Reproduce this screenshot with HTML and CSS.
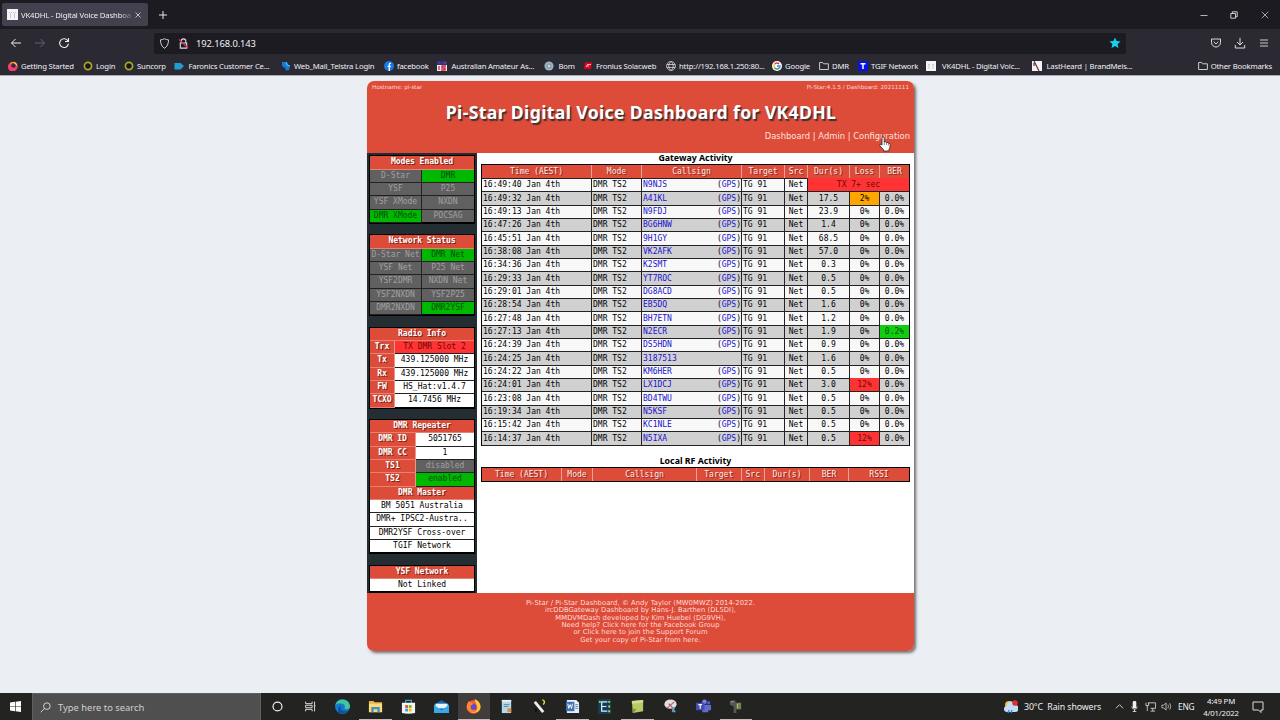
FILE: index.html
```html
<!DOCTYPE html>
<html lang="en">
<head>
    <meta charset="UTF-8">
    <meta name="viewport" content="width=device-width, initial-scale=1.0">
    <title>VK4DHL - Digital Voice Dashboard</title>
    <link rel="stylesheet" href="styles.css">
</head>
<body>
    <div class="tabbar">
        <div class="tab">
            <svg class="tab-icon" viewBox="0 0 11 11"><rect width="11" height="11" fill="#f4f4f6"/><path d="M2 3l1.5 1.5L5 3M3.500 4v5M6 3l1.500 1.500L9 3M7.500 4v5" stroke="#c9c9d0" fill="none"/></svg>
            <span class="tab-title">VK4DHL - Digital Voice Dashboa</span>
            <svg class="tab-close" viewBox="0 0 6 6"><path d="M.5.5l5 5M5.500.5l-5 5" stroke="#ddd" stroke-width=".8"/></svg>
        </div>
        <svg class="new-tab" viewBox="0 0 8 8"><path d="M4 0v8M0 4h8" stroke="#e8e8ee"/></svg>
        <div class="window-buttons">
            <svg viewBox="0 0 8 8"><path d="M.5 4.500h7" stroke="#ddd" stroke-width=".8"/></svg>
            <svg viewBox="0 0 8 8"><path d="M.8 2.500h4.700v4.700H.8zM2.300 2.500V.8h4.900v4.900H5.500" stroke="#ddd" stroke-width=".9" fill="none"/></svg>
            <svg viewBox="0 0 8 8"><path d="M.8.8l6.400 6.400M7.200.8L.8 7.200" stroke="#ddd" stroke-width=".7"/></svg>
        </div>
    </div>

    <div class="toolbar">
        <svg class="tool" viewBox="0 0 12 12"><path d="M11 6H1.500M5.500 2l-4 4 4 4" stroke="#eee" fill="none"/></svg>
        <svg class="tool" viewBox="0 0 12 12"><path d="M1 6h9.500M6.500 2l4 4-4 4" stroke="#62616c" fill="none"/></svg>
        <svg class="tool" viewBox="0 0 12 12"><path d="M9.900 4A4.400 4.400 0 1 0 10.400 6.600M10.500 1v3.500H7" stroke="#eee" stroke-width="1.100" fill="none"/></svg>
        <div class="urlbar">
            <svg class="url-icon" viewBox="0 0 12 12"><path d="M6 .8c1.500.8 3 1.200 4.400 1.200 0 4.500-1.500 7.500-4.400 9.200C3.100 9.500 1.600 6.500 1.600 2 3 2 4.500 1.600 6 .8z" stroke="#ddd" fill="none"/></svg>
            <svg class="url-icon" viewBox="0 0 12 12"><path d="M3.500 5V3.500a2.500 2.500 0 0 1 5 0V5M2.500 5.500h7V11h-7z" stroke="#ddd" stroke-width="1.200" fill="none"/><path d="M1 1.500l10 9.500" stroke="#e2305a" stroke-width="1.400"/></svg>
            <span class="url">192.168.0.143</span>
            <svg class="star" viewBox="0 0 12 12"><path d="M6 .5l1.600 3.600 4 .4-3 2.600.9 3.900L6 9l-3.500 2 .9-3.900-3-2.600 4-.4z" fill="#12d3ee"/></svg>
        </div>
        <div class="toolbar-right">
            <svg viewBox="0 0 12 12"><path d="M1.500 2h9v3.500a4.500 4.500 0 0 1-9 0zM3.600 4.700L6 7l2.400-2.300" stroke="#ddd" fill="none"/></svg>
            <svg viewBox="0 0 12 12"><path d="M6 .8v7M3 5l3 3 3-3M1.300 8v3h9.400V8" stroke="#ddd" fill="none"/></svg>
            <svg viewBox="0 0 12 12"><path d="M2 3h8M2 6h8M2 9h8" stroke="#ddd" stroke-width=".9"/></svg>
        </div>
    </div>

    <div class="bookmarks">
        <a class="bm w75"><svg viewBox="0 0 10 10"><circle cx="5" cy="5.200" r="4.500" fill="#ff7139"/><path d="M1 3a4.500 4.500 0 0 0 7 6 5 5 0 0 0 1.500-4" fill="#f0416a"/><circle cx="5.500" cy="4.500" r="2.300" fill="#35254c"/><path d="M5 1c3 0 4 2 4.300 4L7.500 3.500z" fill="#ffd45a"/></svg>Getting Started</a>
        <a class="bm w41"><svg viewBox="0 0 10 10"><circle cx="5" cy="5" r="3.600" stroke="#a9a528" stroke-width="1.700" fill="#17171b"/></svg>Login</a>
        <a class="bm w50"><svg viewBox="0 0 10 10"><circle cx="5" cy="5" r="3.600" stroke="#a9a528" stroke-width="1.700" fill="#17171b"/></svg>Suncorp</a>
        <a class="bm w107 gap-wide"><svg viewBox="0 0 10 10"><path d="M.5 2h6l3.500 3-3.500 3.500h-6z" fill="#239bd5"/></svg>Faronics Customer Ce...</a>
        <a class="bm w103"><svg viewBox="0 0 10 10"><path d="M1 1h5l1.500 3L9 5l-1 4-3 .5L4 7 1 5z" fill="#137bd0"/><path d="M5 1l1 3 3 1" stroke="#6cc2f5" fill="none"/></svg>Web_Mail_Telstra Login</a>
        <a class="bm w53"><svg viewBox="0 0 10 10"><circle cx="5" cy="5" r="5" fill="#1878e8"/><path d="M7 2.300H6Q5.300 2.300 5.300 3.300V10M3.600 5.400h3.200" stroke="#fff" stroke-width="1.300" fill="none"/></svg>facebook</a>
        <a class="bm w107 gap-wide"><svg viewBox="0 0 10 10"><path d="M0 0h10v4H0z" fill="#26378f"/><path d="M0 4h10v6H0z" fill="#eee"/><path d="M2 2h1M7 2h2M2 5v4M9 5H5v2h3v2H4" stroke="#d6203a" stroke-width="1.300" fill="none"/></svg>Australian Amateur As...</a>
        <a class="bm w39 gap-wide"><svg viewBox="0 0 10 10"><circle cx="5" cy="5" r="4.600" fill="#9db0bf"/><circle cx="5" cy="5" r="2" fill="#d2dce3" stroke="#70899d"/></svg>Bom</a>
        <a class="bm w83"><svg viewBox="0 0 10 10"><path d="M2 1.500h7L8 8H1z" fill="#e2001a"/><path d="M3 6l1.500-2.500H8M4 5h2" stroke="#fff" stroke-width=".7" fill="none"/></svg>Fronius Solar.web</a>
        <a class="bm w106"><svg viewBox="0 0 10 10"><path d="M5 .6a4.400 4.400 0 1 0 .01 0M5 .6c-3 2.500-3 6.300 0 8.800 3-2.500 3-6.300 0-8.800M1 3.500h8M1 6.500h8" stroke="#ddd" stroke-width=".8" fill="none"/></svg>http://192.168.1.250:80...</a>
        <a class="bm w47"><svg viewBox="0 0 10 10"><circle cx="5" cy="5" r="5" fill="#fff"/><g fill="none" stroke-width="1.400"><path d="M2.500 3.300A3 3 0 0 1 7.200 2.900" stroke="#ea4335"/><path d="M2.500 3.300a3 3 0 0 0 0 3.400" stroke="#fbbc05"/><path d="M2.500 6.700a3 3 0 0 0 4.700.4" stroke="#34a853"/><path d="M7.200 7.100A3 3 0 0 0 8 5H5" stroke="#4285f4"/></g></svg>Google</a>
        <a class="bm w39"><svg viewBox="0 0 10 10"><path d="M.6 1.500h3l1 1.300h4.800v5.700H.6z" stroke="#ddd" stroke-width=".9" fill="none"/></svg>DMR</a>
        <a class="bm w68"><svg viewBox="0 0 10 10"><rect width="10" height="10" fill="#0712e8"/><path d="M2.500 2.700h5M5 2.700V8" stroke="#fff" stroke-width="1.500"/></svg>TGIF Network</a>
        <a class="bm w106 gap-wider"><svg viewBox="0 0 10 10"><rect width="10" height="10" fill="#f4f4f6"/><path d="M2 3l1 1 1-1M3 4v4M6 3l1 1 1-1M7 4v4" stroke="#c9c9d0" fill="none"/></svg>VK4DHL - Digital Voic...</a>
        <a class="bm w106 gap-wide"><svg viewBox="0 0 10 10"><rect width="10" height="10" fill="#f4f4f6"/><path d="M2 0l5 10M2 2v3" stroke="#6a3038" stroke-width="1.200"/></svg>LastHeard | BrandMeis...</a>
        <a class="bm other"><svg viewBox="0 0 10 10"><path d="M.6 1.500h3l1 1.300h4.800v5.700H.6z" stroke="#ddd" stroke-width=".9" fill="none"/></svg>Other Bookmarks</a>
    </div>

    <div class="page">
        <div class="container">
            <div class="header">
                <div class="smallprint"><span>Hostname: pi-star</span><span>Pi-Star:4.1.5 / Dashboard: 20211111</span></div>
                <h1>Pi-Star Digital Voice Dashboard for VK4DHL</h1>
                <div class="navbar"><a>Dashboard</a> | <a>Admin</a> | <a>Configuration</a></div>
                <svg class="cursor" viewBox="0 0 12 16"><path d="M3 9V2q0-1.300 1.100-1.300T5.200 2v4q2-.6 2.300.5 1.600-.3 1.900.7 1.800-.1 1.800 1.300c0 3-.7 3.500-1.200 5V15H4.500v-1.300L.8 9.800Q.4 8.200 1.800 8.300z" fill="#fff" stroke="#222" stroke-width=".8"/><path d="M5.300 6v3M7.500 6.500V9M9.400 7.200V9.500" stroke="#444" stroke-width=".6"/></svg>
            </div>

            <div class="main">
                <div class="nav">
                    <div class="box halves">
                        <b class="full">Modes Enabled</b>
                        <i class="off">D-Star</i><i class="on">DMR</i>
                        <i class="off">YSF</i><i class="off">P25</i>
                        <i class="off">YSF XMode</i><i class="off">NXDN</i>
                        <i class="on">DMR XMode</i><i class="off">POCSAG</i>
                    </div>
                    <div class="box halves">
                        <b class="full">Network Status</b>
                        <i class="off">D-Star Net</i><i class="on">DMR Net</i>
                        <i class="off">YSF Net</i><i class="off">P25 Net</i>
                        <i class="off">YSF2DMR</i><i class="off">NXDN Net</i>
                        <i class="off">YSF2NXDN</i><i class="off">YSF2P25</i>
                        <i class="off">DMR2NXDN</i><i class="on">DMR2YSF</i>
                    </div>
                    <div class="box radio">
                        <b class="full">Radio Info</b>
                        <b>Trx</b><i class="tx">TX DMR Slot 2</i>
                        <b>Tx</b><i>439.125000 MHz</i>
                        <b>Rx</b><i>439.125000 MHz</i>
                        <b>FW</b><i>HS_Hat:v1.4.7</i>
                        <b>TCXO</b><i>14.7456 MHz</i>
                    </div>
                    <div class="box repeater">
                        <b class="full">DMR Repeater</b>
                        <b>DMR ID</b><i>5051765</i>
                        <b>DMR CC</b><i>1</i>
                        <b>TS1</b><i class="off">disabled</i>
                        <b>TS2</b><i class="on">enabled</i>
                        <b class="full">DMR Master</b>
                        <i class="full">BM 5051 Australia</i>
                        <i class="full">DMR+ IPSC2-Austra..</i>
                        <i class="full">DMR2YSF Cross-over</i>
                        <i class="full">TGIF Network</i>
                    </div>
                    <div class="box halves">
                        <b class="full">YSF Network</b>
                        <i class="full">Not Linked</i>
                    </div>
                </div>

                <div class="content">
                    <h2>Gateway Activity</h2>
                    <div class="log gateway">
                        <div class="row head"><b>Time (AEST)</b><b>Mode</b><b>Callsign</b><b>Target</b><b>Src</b><b>Dur(s)</b><b>Loss</b><b>BER</b></div>
                        <div class="row"><i>16:49:40 Jan 4th</i><i>DMR TS2</i><i><a>N9NJS</a><span>(<a>GPS</a>)</span></i><i>TG 91</i><i>Net</i><i class="txing">TX 7+ sec</i></div>
                        <div class="row"><i>16:49:32 Jan 4th</i><i>DMR TS2</i><i><a>A41KL</a><span>(<a>GPS</a>)</span></i><i>TG 91</i><i>Net</i><i>17.5</i><i class="warn">2%</i><i>0.0%</i></div>
                        <div class="row"><i>16:49:13 Jan 4th</i><i>DMR TS2</i><i><a>N9FDJ</a><span>(<a>GPS</a>)</span></i><i>TG 91</i><i>Net</i><i>23.9</i><i>0%</i><i>0.0%</i></div>
                        <div class="row"><i>16:47:26 Jan 4th</i><i>DMR TS2</i><i><a>BG6HNW</a><span>(<a>GPS</a>)</span></i><i>TG 91</i><i>Net</i><i>1.4</i><i>0%</i><i>0.0%</i></div>
                        <div class="row"><i>16:45:51 Jan 4th</i><i>DMR TS2</i><i><a>9H1GY</a><span>(<a>GPS</a>)</span></i><i>TG 91</i><i>Net</i><i>68.5</i><i>0%</i><i>0.0%</i></div>
                        <div class="row"><i>16:38:08 Jan 4th</i><i>DMR TS2</i><i><a>VK2AFK</a><span>(<a>GPS</a>)</span></i><i>TG 91</i><i>Net</i><i>57.0</i><i>0%</i><i>0.0%</i></div>
                        <div class="row"><i>16:34:36 Jan 4th</i><i>DMR TS2</i><i><a>K2SMT</a><span>(<a>GPS</a>)</span></i><i>TG 91</i><i>Net</i><i>0.3</i><i>0%</i><i>0.0%</i></div>
                        <div class="row"><i>16:29:33 Jan 4th</i><i>DMR TS2</i><i><a>YT7ROC</a><span>(<a>GPS</a>)</span></i><i>TG 91</i><i>Net</i><i>0.5</i><i>0%</i><i>0.0%</i></div>
                        <div class="row"><i>16:29:01 Jan 4th</i><i>DMR TS2</i><i><a>DG8ACD</a><span>(<a>GPS</a>)</span></i><i>TG 91</i><i>Net</i><i>0.5</i><i>0%</i><i>0.0%</i></div>
                        <div class="row"><i>16:28:54 Jan 4th</i><i>DMR TS2</i><i><a>EB5DQ</a><span>(<a>GPS</a>)</span></i><i>TG 91</i><i>Net</i><i>1.6</i><i>0%</i><i>0.0%</i></div>
                        <div class="row"><i>16:27:48 Jan 4th</i><i>DMR TS2</i><i><a>BH7ETN</a><span>(<a>GPS</a>)</span></i><i>TG 91</i><i>Net</i><i>1.2</i><i>0%</i><i>0.0%</i></div>
                        <div class="row"><i>16:27:13 Jan 4th</i><i>DMR TS2</i><i><a>N2ECR</a><span>(<a>GPS</a>)</span></i><i>TG 91</i><i>Net</i><i>1.9</i><i>0%</i><i class="good">0.2%</i></div>
                        <div class="row"><i>16:24:39 Jan 4th</i><i>DMR TS2</i><i><a>DS5HDN</a><span>(<a>GPS</a>)</span></i><i>TG 91</i><i>Net</i><i>0.9</i><i>0%</i><i>0.0%</i></div>
                        <div class="row"><i>16:24:25 Jan 4th</i><i>DMR TS2</i><i><a>3187513</a></i><i>TG 91</i><i>Net</i><i>1.6</i><i>0%</i><i>0.0%</i></div>
                        <div class="row"><i>16:24:22 Jan 4th</i><i>DMR TS2</i><i><a>KM6HER</a><span>(<a>GPS</a>)</span></i><i>TG 91</i><i>Net</i><i>0.5</i><i>0%</i><i>0.0%</i></div>
                        <div class="row"><i>16:24:01 Jan 4th</i><i>DMR TS2</i><i><a>LX1DCJ</a><span>(<a>GPS</a>)</span></i><i>TG 91</i><i>Net</i><i>3.0</i><i class="bad">12%</i><i>0.0%</i></div>
                        <div class="row"><i>16:23:08 Jan 4th</i><i>DMR TS2</i><i><a>BD4TWU</a><span>(<a>GPS</a>)</span></i><i>TG 91</i><i>Net</i><i>0.5</i><i>0%</i><i>0.0%</i></div>
                        <div class="row"><i>16:19:34 Jan 4th</i><i>DMR TS2</i><i><a>N5KSF</a><span>(<a>GPS</a>)</span></i><i>TG 91</i><i>Net</i><i>0.5</i><i>0%</i><i>0.0%</i></div>
                        <div class="row"><i>16:15:42 Jan 4th</i><i>DMR TS2</i><i><a>KC1NLE</a><span>(<a>GPS</a>)</span></i><i>TG 91</i><i>Net</i><i>0.5</i><i>0%</i><i>0.0%</i></div>
                        <div class="row"><i>16:14:37 Jan 4th</i><i>DMR TS2</i><i><a>N5IXA</a><span>(<a>GPS</a>)</span></i><i>TG 91</i><i>Net</i><i>0.5</i><i class="bad">12%</i><i>0.0%</i></div>
                    </div>
                    <h2 class="second">Local RF Activity</h2>
                    <div class="log local">
                        <div class="row head"><b>Time (AEST)</b><b>Mode</b><b>Callsign</b><b>Target</b><b>Src</b><b>Dur(s)</b><b>BER</b><b>RSSI</b></div>
                    </div>
                </div>
            </div>

            <div class="footer">
                Pi-Star / Pi-Star Dashboard, © Andy Taylor (MW0MWZ) 2014-2022.<br>
                ircDDBGateway Dashboard by Hans-J. Barthen (DL5DI),<br>
                MMDVMDash developed by Kim Huebel (DG9VH),<br>
                Need help? Click here for the Facebook Group<br>
                or Click here to join the Support Forum<br>
                Get your copy of Pi-Star from here.
            </div>
        </div>
    </div>

    <div class="taskbar">
        <div class="start"><svg viewBox="0 0 12 12"><path d="M0 1.700l5.500-.8v4.800H0zM6.200.8L12 0v5.700H6.200zM0 6.400h5.500v4.800L0 10.400zM6.200 6.400H12V12l-5.800-.8z" fill="#fff"/></svg></div>
        <div class="search">
            <svg viewBox="0 0 12 12"><circle cx="7.500" cy="4.500" r="3.600" stroke="#ddd" fill="none"/><path d="M5 7L.8 11.200" stroke="#ddd"/></svg>
            Type here to search
        </div>
        <div class="apps">
            <div class="app"><svg viewBox="0 0 16 16"><circle cx="8" cy="8" r="5.500" stroke="#eee" stroke-width="1.500" fill="none"/></svg></div>
            <div class="app"><svg viewBox="0 0 16 16"><path d="M2 2v2.500h8V2M2 14v-2.500h8V14M2 6.500h8v3H2zM13 2v12M12 7h2" stroke="#ddd" stroke-width="1.200" fill="none"/></svg></div>
            <div class="app"><svg viewBox="0 0 16 16"><circle cx="8" cy="8" r="8" fill="#1479c9"/><path d="M.5 6A8 8 0 0 1 16 8c0 3-4 3.500-6 2 1-1 1-4-2-5-3-.8-6 0-7.500 1z" fill="#42c59a"/><path d="M6 7c-1 3 1 6 5 6l3.500-1C12 16 7 17 3.500 14 3 10 4 8 6 7z" fill="#104f9d"/></svg></div>
            <div class="app open"><svg viewBox="0 0 16 16"><path d="M1 2h5l1 1.500h8V14H1z" fill="#e9b64b"/><path d="M1 5h14v9H1z" fill="#ffdb76"/><path d="M3.500 14V8.500h9V14h-2.500v-3h-4v3z" fill="#3c92cc"/></svg></div>
            <div class="app"><svg viewBox="0 0 16 16"><path d="M5 5V1.500h6V5" stroke="#38a9dc" stroke-width="1.200" fill="none"/><path d="M1 4h14v11q-7 1.500-14 0z" fill="#f4f4f4"/><path d="M4.500 6.500h3v3h-3z" fill="#e84d3b"/><path d="M8.300 6.500h3v3h-3z" fill="#7fba00"/><path d="M4.500 10.300h3v3h-3z" fill="#2f9ee5"/><path d="M8.300 10.300h3v3h-3z" fill="#ffb900"/></svg></div>
            <div class="app"><svg viewBox="0 0 16 16"><path d="M0 6l8-5 8 5v9H0z" fill="#1565b5"/><path d="M1.500 5h13v5h-13z" fill="#e9f5fc"/><path d="M0 6l8 6 8-6v9H0z" fill="#35a9ea"/></svg></div>
            <div class="app open active"><svg viewBox="0 0 16 16"><circle cx="8" cy="8.500" r="7.300" fill="#ff5b38"/><path d="M9 0c3 1 7 4 6.500 9-.5 5-7 7-11 5 6 1 9-3 7-7z" fill="#ffc638"/><circle cx="7.500" cy="8.500" r="3.800" fill="#6d45c7"/><path d="M1 6l2-4 2 2 3 1-3 2v3q2 3 5 1-2 4-6 2T1 6z" fill="#ff8b28"/></svg></div>
            <div class="app"><svg viewBox="0 0 16 16"><path d="M3 1h10v14H3z" fill="#b5d8e9"/><path d="M3 1h10v2H3z" fill="#e9eef0"/><path d="M5 6h6M5 8h5" stroke="#5387a5"/><path d="M9 10h4v4H9z" fill="#e48647"/></svg></div>
            <div class="app"><svg viewBox="0 0 16 16"><path d="M3 3l9 11" stroke="#eee" stroke-width="3"/><path d="M11 1q4 1 1 5" stroke="#e9d827" stroke-width="1.500" fill="none"/><path d="M4 10v4" stroke="#111" stroke-width="2"/></svg></div>
            <div class="app open"><svg viewBox="0 0 16 16"><path d="M2 1h10l3 3v11H2z" fill="#e6eef9"/><path d="M1 3h9v10H1z" fill="#3d70b5"/><path d="M3 5l1 5 1.500-4L7 10l1-5" stroke="#fff" fill="none"/><path d="M11 6h3M11 8h3M11 10h3" stroke="#5985c0"/></svg></div>
            <div class="app"><svg viewBox="0 0 16 16"><path d="M1 0h14v16H1z" fill="#123e5a"/><path d="M11 3H5v10h6M5 8h5" stroke="#e9ede9" stroke-width="1.300" fill="none"/><path d="M2 2h2v2H2zM12 2h2v2h-2zM12 7h2v2h-2zM12 12h2v2h-2z" fill="#b4d85c"/></svg></div>
            <div class="app open"><svg viewBox="0 0 16 16"><path d="M2 2l12-1v12L3 15z" fill="#b8ca68"/><path d="M2 2l12-1v3L2 5z" fill="#d4e08d"/><path d="M3 15l4-4-5-1z" fill="#7b913d"/></svg></div>
            <div class="app"><svg viewBox="0 0 16 16"><ellipse cx="8" cy="5.500" rx="6.500" ry="5" fill="#e6dddd"/><path d="M4 10l8-7M6 5l6 6" stroke="#b25b5b" stroke-width="1.200"/><path d="M9 9l4 5M12 9l-2 5" stroke="#5e9dbb" stroke-width="1.800"/></svg></div>
            <div class="app"><svg viewBox="0 0 16 16"><circle cx="9" cy="3" r="2.500" fill="#7b83eb"/><circle cx="13.500" cy="4" r="1.800" fill="#5059c9"/><path d="M5 6h8v8H7zM12 6.500h4V12h-4z" fill="#616bd1"/><path d="M0 4h9v8H0z" fill="#454db4"/><path d="M2.500 6h4M4.500 6v4.500" stroke="#fff" stroke-width="1.200"/></svg></div>
            <div class="app open"><svg viewBox="0 0 16 16"><path d="M2 2l5-1 2 3v11H6V8L2 6z" fill="#55565a"/><path d="M9 4h5v7H9z" fill="#728351"/><path d="M10 5v5" stroke="#b9c894"/><path d="M3 3h3" stroke="#aaa"/></svg></div>
        </div>
        <div class="tray">
            <svg class="weather" viewBox="0 0 14 14"><circle cx="5" cy="5" r="4" fill="#f4b942"/><path d="M3 12a3 3 0 0 1 0-6 4 4 0 0 1 8-1 3.500 3.500 0 0 1 0 7z" fill="#c4dcf5"/><path d="M5 10l-1 3M8 10l-1 3" stroke="#2c91e6" stroke-width="1.300"/><circle cx="11" cy="3" r="2.800" fill="#df3030"/></svg>
            <span class="weather-text">30°C&nbsp; Rain showers</span>
            <svg class="i-caret" viewBox="0 0 10 10"><path d="M1 7l4-4 4 4" stroke="#ddd" fill="none"/></svg>
            <svg class="i-mic" viewBox="0 0 10 12"><rect x="3" y="0" width="4" height="8" rx="1.500" fill="#eee"/><path d="M2 6q0 3 3 3t3-3M5 9v3M3 11.500h4" stroke="#ddd" fill="none"/></svg>
            <svg class="i-net" viewBox="0 0 12 12"><path d="M3 2h8.500v6H6M1 2v3h3V2M2.500 5v6M6 11h5M8.500 8v3" stroke="#ddd" stroke-width=".9" fill="none"/></svg>
            <svg class="i-vol" viewBox="0 0 12 12"><path d="M1 4.500h2L5.500 2v8L3 7.500H1zM7.500 4q1.300 2 0 4M9.500 2.500q2.300 3.500 0 7" stroke="#ccc" stroke-width=".9" fill="none"/></svg>
            <span class="lang">ENG</span>
            <div class="clock">4:49 PM<br>4/01/2022</div>
            <svg class="i-note" viewBox="0 0 12 12"><path d="M1 1h10v8H9v2.500L6.500 9H1z" stroke="#ddd" fill="none"/></svg>
        </div>
    </div>
</body>
</html>
```

FILE: styles.css
```css
* {
    margin: 0;
    padding: 0;
    box-sizing: border-box;
}

body {
    width: 1280px;
    height: 720px;
    overflow: hidden;
    display: flex;
    flex-direction: column;
    background: #ebeff4;
    font-family: 'Noto Sans', 'Open Sans', sans-serif;
    color: #f0f0f4;
}

svg {
    display: block;
    flex: none;
}

i {
    font-style: normal;
}

/* browser chrome */
.tabbar {
    height: 29px;
    display: flex;
    align-items: center;
    background: #1c1b22;
}

.tab {
    width: 146px;
    height: 23px;
    margin-left: 2px;
    padding: 0 7px 0 5px;
    display: flex;
    align-items: center;
    border-radius: 2px;
    background: #42414d;
    font-size: 7.7px;
}

.tab-icon {
    width: 11px;
    height: 11px;
    margin-right: 3px;
}

.tab-title {
    width: 113px;
    margin-right: 1px;
    white-space: nowrap;
    letter-spacing: -0.14px;
    -webkit-mask-image: linear-gradient(to right, #000 87%, transparent);
    mask-image: linear-gradient(to right, #000 87%, transparent);
}

.tab-close {
    width: 6px;
    height: 6px;
}

.new-tab {
    width: 8px;
    height: 8px;
    margin-left: 11px;
}

.window-buttons {
    margin-left: auto;
    padding-right: 11.5px;
    display: flex;
    gap: 22.5px;
}

.window-buttons svg {
    width: 8px;
    height: 8px;
}

.toolbar {
    height: 28px;
    padding: 0 10px;
    display: flex;
    align-items: center;
    background: #2b2a33;
}

.tool {
    width: 12px;
    height: 12px;
    margin-right: 12px;
}

.urlbar {
    width: 972px;
    height: 21px;
    margin-left: 72px;
    padding: 0 5px;
    display: flex;
    align-items: center;
    border-radius: 2px;
    background: #1c1b22;
}

.url-icon {
    width: 11px;
    height: 11px;
    margin-right: 7.500px;
}

.url {
    font-size: 9.400px;
    letter-spacing: -0.1px;
}

.star {
    width: 12px;
    height: 12px;
    margin-left: auto;
}

.toolbar-right {
    margin-left: auto;
    display: flex;
    gap: 12px;
}

.toolbar-right svg {
    width: 12px;
    height: 12px;
}

.bookmarks {
    height: 18px;
    padding: 0 8px 1px;
    display: flex;
    align-items: center;
    background: #2b2a33;
    font-size: 7.7px;
    letter-spacing: -0.17px;
}

.bm {
    display: flex;
    flex: none;
    align-items: center;
    white-space: nowrap;
    line-height: 12px;
}

.bm svg {
    width: 10px;
    height: 10px;
    margin-right: 3px;
}

.gap-wide svg {
    margin-right: 4.500px;
}

.gap-wider svg {
    margin-right: 6px;
}

.w39 { width: 39px; }
.w41 { width: 41px; }
.w47 { width: 47px; }
.w50 { width: 50px; }
.w53 { width: 53px; }
.w68 { width: 68px; }
.w75 { width: 75px; }
.w83 { width: 83px; }
.w103 { width: 103px; }
.w106 { width: 106px; }
.w107 { width: 107px; }

.other {
    margin-left: auto;
}

/* dashboard */
.page {
    flex: 1;
    padding-top: 5px;
    display: flex;
    justify-content: center;
    align-items: flex-start;
    border-top: 1px solid #a8a9b2;
}

.container {
    width: 547px;
    margin-left: 1px;
    border-radius: 7px;
    background: #fff;
    box-shadow: 2px 2px 3px #707070;
    font-family: 'DejaVu Sans', sans-serif;
}

.header {
    position: relative;
    height: 72px;
    padding: 3px 4px 0 5px;
    border-radius: 7px 7px 0 0;
    background: #dd4b39;
    color: #fff;
}

.smallprint {
    display: flex;
    justify-content: space-between;
    padding-right: 1px;
    font-size: 5.6px;
    line-height: 7px;
    color: #ffd9d3;
}

.header h1 {
    margin-top: 9.500px;
    text-align: center;
    font: bold 17.6px/22px 'Noto Sans', sans-serif;
    letter-spacing: 0.36px;
    text-shadow: 1.5px 1.5px 1px #333;
}

.navbar {
    margin-top: 7.500px;
    text-align: right;
    font-size: 8.400px;
    line-height: 12px;
    color: #ffe3de;
}

.cursor {
    position: absolute;
    left: 512px;
    top: 55px;
    width: 12px;
    height: 16px;
}

.main {
    display: flex;
    height: 440px;
}

.nav {
    width: 110px;
    padding: 2.33px 2px 0;
    display: flex;
    flex-direction: column;
    gap: 10.33px;
    background: #242d31;
}

.box,
.log {
    border: 1px solid #000;
    font-family: 'DejaVu Sans Mono', monospace;
    font-size: 8px;
    color: #000;
}

.box {
    width: 106px;
    display: grid;
    grid-auto-rows: 13.33px;
}

.box b,
.box i {
    display: flex;
    align-items: center;
    justify-content: center;
    white-space: nowrap;
    line-height: 12px;
    border-bottom: 1px solid #222;
    background: #fff;
}

.box b {
    color: #fff;
    background: #dd4b39;
    border-color: #e48276;
    letter-spacing: -0.03px;
    text-shadow: 1px 1px 0 #7a261b;
}

.box b:not(.full) {
    border-right: 1px solid #e9988d;
}

.box > :last-child {
    border-bottom-color: #000;
}

.box .full {
    grid-column: 1 / -1;
}

.box .off {
    color: #a0a0a0;
    background: #606060;
}

.box .on {
    color: #04500a;
    background: #00b800;
}

.box .tx {
    color: #700808;
    background: #ff3333;
}

.halves {
    grid-template-columns: 52px 52px;
}

.halves i:not(.full):nth-child(even) {
    border-right: 1px solid #222;
}

.radio {
    grid-template-columns: 25px 79px;
}

.repeater {
    grid-template-columns: 46px 58px;
}

.content {
    width: 437px;
    padding-left: 4px;
}

.content h2 {
    width: 429px;
    height: 11px;
    text-align: center;
    font: bold 8.800px/11px 'Noto Sans', sans-serif;
    color: #000;
}

.content .second {
    margin-top: 10px;
}

.log {
    width: 429px;
}

.row {
    display: grid;
    height: 13.33px;
    background: #f8f8f8;
}

.row:nth-child(odd) {
    background: #d0d0d0;
}

.gateway .row {
    grid-template-columns: 110px 50px 100px 43px 23px 42px 30px 29px;
}

.local .row {
    grid-template-columns: 80px 31px 104px 44.500px 23.500px 45px 39px 60px;
}

.row b,
.row i {
    padding: 0 1px;
    border-right: 1px solid #222;
    border-bottom: 1px solid #222;
    line-height: 13px;
    white-space: nowrap;
}

.row > :last-child {
    border-right: 0;
}

.row b {
    font-weight: normal;
    text-align: center;
    color: #ffe9e5;
    background: #dd4b39;
    border-right-color: #eda197;
    text-shadow: 1px 1px 0 #8b2c20;
}

.local .row b {
    border-bottom: 0;
}

.row a {
    color: #1a12d0;
}

.row i:nth-child(3) {
    display: flex;
    justify-content: space-between;
    padding-right: 0;
}

.row i:nth-child(n+5) {
    text-align: center;
}

.row .txing {
    grid-column: 6 / -1;
    color: #700808;
    background: #ff3333;
}

.row .warn {
    background: #ffa500;
}

.row .bad {
    color: #700808;
    background: #ff3333;
}

.row .good {
    color: #04500a;
    background: #12cc12;
}

.footer {
    height: 58px;
    padding-top: 7px;
    border-radius: 0 0 7px 7px;
    background: #dd4b39;
    color: #ffddd7;
    text-align: center;
    font-size: 6.800px;
    letter-spacing: 0.05px;
    line-height: 7.35px;
}

/* taskbar */
.taskbar {
    height: 27px;
    display: flex;
    align-items: center;
    background: #232321;
}

.start {
    width: 32px;
    padding-left: 10px;
}

.start svg {
    width: 11px;
    height: 11px;
}

.search {
    width: 229px;
    height: 27px;
    padding-left: 7px;
    display: flex;
    align-items: center;
    gap: 7px;
    background: #4f4f4f;
    border: 1px solid #606060;
    border-bottom: 0;
    font-size: 9.400px;
    color: #d0d0d0;
}

.search svg {
    width: 11px;
    height: 11px;
}

.apps {
    display: flex;
}

.app {
    width: 32.75px;
    height: 27px;
    display: flex;
    align-items: center;
    justify-content: center;
    border: solid transparent;
    border-width: 1px 0;
}

.app svg {
    width: 15px;
    height: 15px;
}

.app:nth-child(-n+2) svg {
    width: 13px;
    height: 13px;
}

.open {
    border-bottom-color: #c8b8b8;
}

.active {
    background: #423d3d;
}

.tray {
    margin-left: auto;
    padding-right: 16px;
    display: flex;
    align-items: center;
    font-size: 8.300px;
    white-space: nowrap;
}

.weather {
    width: 14px;
    height: 14px;
    margin-right: 6px;
}

.weather-text {
    width: 82px;
    font-size: 8.800px;
    letter-spacing: -0.1px;
}

.i-caret {
    width: 9px;
    height: 9px;
    margin: 0 6px 0 9px;
}

.i-mic {
    width: 9px;
    height: 11px;
    margin-right: 6px;
}

.i-net,
.i-vol {
    width: 11px;
    height: 11px;
    margin-right: 5px;
}

.lang {
    width: 17px;
    margin-left: 1px;
    letter-spacing: -0.2px;
}

.clock {
    width: 52px;
    text-align: center;
    font-size: 7.800px;
    line-height: 12px;
    letter-spacing: -0.15px;
}

.i-note {
    width: 12px;
    height: 12px;
    margin-left: 5px;
}
```
